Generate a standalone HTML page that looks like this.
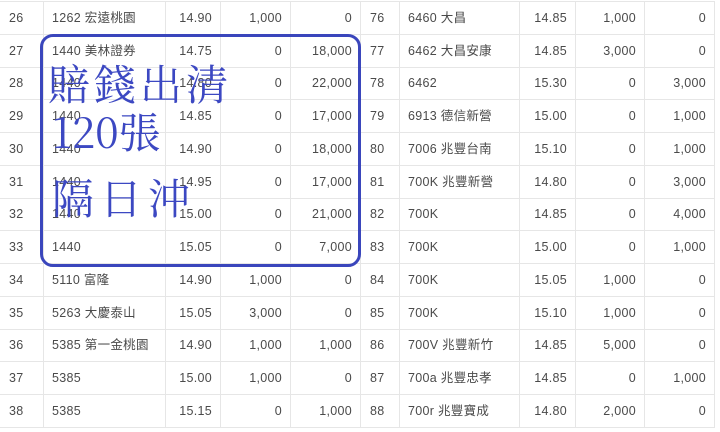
<!DOCTYPE html>
<html><head><style>
body{margin:0;width:720px;height:432px;overflow:hidden;background:#fff}
table{position:absolute;top:1px;border-collapse:collapse;table-layout:fixed}
tr{height:32.75px}
td{font-family:"Liberation Sans","Noto Sans CJK TC",sans-serif;font-size:12.5px;letter-spacing:0.3px;color:#4a4a4a;border:1px solid #e6e6e6;padding:0 8px;white-space:nowrap;overflow:hidden;line-height:14px;box-sizing:border-box}
td:first-child{padding-left:9px}
.r{text-align:right;padding-right:8px}
#box{position:absolute;left:40px;top:34px;width:315px;height:227px;border:3px solid #3a46bc;border-radius:13px}
.h{position:absolute;font-family:"Noto Serif CJK TC","Noto Serif CJK SC",serif;color:#3c48c2;font-size:42px;line-height:1;letter-spacing:4px}
</style></head><body>
<table style="left:-1px;width:361px"><colgroup><col style="width:44px"><col style="width:122px"><col style="width:55px"><col style="width:70px"><col style="width:70px"></colgroup>
<tr><td>26</td><td>1262 宏遠桃園</td><td class=r>14.90</td><td class=r>1,000</td><td class=r>0</td></tr>
<tr><td>27</td><td>1440 美林證券</td><td class=r>14.75</td><td class=r>0</td><td class=r>18,000</td></tr>
<tr><td>28</td><td>1440</td><td class=r>14.80</td><td class=r>0</td><td class=r>22,000</td></tr>
<tr><td>29</td><td>1440</td><td class=r>14.85</td><td class=r>0</td><td class=r>17,000</td></tr>
<tr><td>30</td><td>1440</td><td class=r>14.90</td><td class=r>0</td><td class=r>18,000</td></tr>
<tr><td>31</td><td>1440</td><td class=r>14.95</td><td class=r>0</td><td class=r>17,000</td></tr>
<tr><td>32</td><td>1440</td><td class=r>15.00</td><td class=r>0</td><td class=r>21,000</td></tr>
<tr><td>33</td><td>1440</td><td class=r>15.05</td><td class=r>0</td><td class=r>7,000</td></tr>
<tr><td>34</td><td>5110 富隆</td><td class=r>14.90</td><td class=r>1,000</td><td class=r>0</td></tr>
<tr><td>35</td><td>5263 大慶泰山</td><td class=r>15.05</td><td class=r>3,000</td><td class=r>0</td></tr>
<tr><td>36</td><td>5385 第一金桃園</td><td class=r>14.90</td><td class=r>1,000</td><td class=r>1,000</td></tr>
<tr><td>37</td><td>5385</td><td class=r>15.00</td><td class=r>1,000</td><td class=r>0</td></tr>
<tr><td>38</td><td>5385</td><td class=r>15.15</td><td class=r>0</td><td class=r>1,000</td></tr>
</table>
<table style="left:360px;width:354px"><colgroup><col style="width:39px"><col style="width:120px"><col style="width:56px"><col style="width:69px"><col style="width:70px"></colgroup>
<tr><td>76</td><td>6460 大昌</td><td class=r>14.85</td><td class=r>1,000</td><td class=r>0</td></tr>
<tr><td>77</td><td>6462 大昌安康</td><td class=r>14.85</td><td class=r>3,000</td><td class=r>0</td></tr>
<tr><td>78</td><td>6462</td><td class=r>15.30</td><td class=r>0</td><td class=r>3,000</td></tr>
<tr><td>79</td><td>6913 德信新營</td><td class=r>15.00</td><td class=r>0</td><td class=r>1,000</td></tr>
<tr><td>80</td><td>7006 兆豐台南</td><td class=r>15.10</td><td class=r>0</td><td class=r>1,000</td></tr>
<tr><td>81</td><td>700K 兆豐新營</td><td class=r>14.80</td><td class=r>0</td><td class=r>3,000</td></tr>
<tr><td>82</td><td>700K</td><td class=r>14.85</td><td class=r>0</td><td class=r>4,000</td></tr>
<tr><td>83</td><td>700K</td><td class=r>15.00</td><td class=r>0</td><td class=r>1,000</td></tr>
<tr><td>84</td><td>700K</td><td class=r>15.05</td><td class=r>1,000</td><td class=r>0</td></tr>
<tr><td>85</td><td>700K</td><td class=r>15.10</td><td class=r>1,000</td><td class=r>0</td></tr>
<tr><td>86</td><td>700V 兆豐新竹</td><td class=r>14.85</td><td class=r>5,000</td><td class=r>0</td></tr>
<tr><td>87</td><td>700a 兆豐忠孝</td><td class=r>14.85</td><td class=r>0</td><td class=r>1,000</td></tr>
<tr><td>88</td><td>700r 兆豐寶成</td><td class=r>14.80</td><td class=r>2,000</td><td class=r>0</td></tr>
</table>
<div id="box"></div>
<div class="h" style="left:48px;top:62px">賠錢出清</div>
<div class="h" style="left:52px;top:110px;letter-spacing:0">120張</div>
<div class="h" style="left:52px;top:176px;letter-spacing:6px">隔日沖</div>
</body></html>
